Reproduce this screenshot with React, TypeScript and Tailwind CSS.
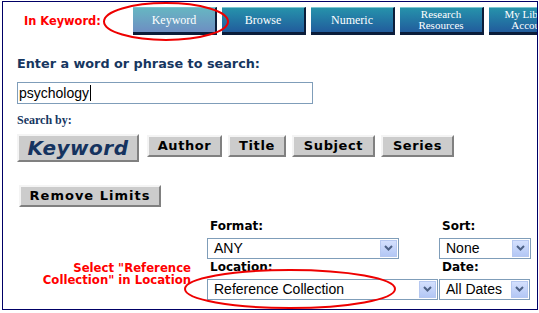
import React from 'react';

const tabs = [
  { label: ['Keyword'], active: true },
  { label: ['Browse'] },
  { label: ['Numeric'] },
  { label: ['Research', 'Resources'] },
  { label: ['My Library', 'Account'] },
];

const byButtons = [
  { label: 'Author', w: 'w-[75px]' },
  { label: 'Title', w: 'w-[58px]' },
  { label: 'Subject', w: 'w-[83px]' },
  { label: 'Series', w: 'w-[73px]' },
];

// little blue drop-down arrow like the old XP selects
const Arrow = () => (
  <div className="flex h-[17px] w-[17px] shrink-0 items-center justify-center border border-[#b6c8f0] bg-gradient-to-b from-[#d4e0fd] to-[#b3c7f5]">
    <svg width="9" height="6" viewBox="0 0 9 6">
      <path d="M1 1 L4.5 4.5 L8 1" fill="none" stroke="#4d6185" strokeWidth="2" />
    </svg>
  </div>
);

const Select = ({ value, className }: { value: string; className: string }) => (
  <div className={`flex h-[21px] items-center justify-between border border-[#7f9db9] bg-white pl-[6px] pr-[1px] ${className}`}>
    <span className="font-['Liberation_Sans',sans-serif] text-[14px] font-normal leading-none text-black">{value}</span>
    <Arrow />
  </div>
);

const GrayButton = ({ children, className }: { children: React.ReactNode; className: string }) => (
  <div
    className={`flex shrink-0 items-center justify-center border-2 border-t-[#f4f4f4] border-l-[#f4f4f4] border-b-[#808080] border-r-[#808080] bg-[#cccccc] ${className}`}
  >
    {children}
  </div>
);

export default function App() {
  return (
    <div className="relative h-[313px] w-[539px] overflow-hidden bg-white">
      <div className="ml-[2px] mt-[1px] h-[309px] w-[536px] overflow-hidden border border-[#000066]">
        {/* tab row */}
        <div className="flex items-start pt-[5px]">
          <div className="w-[130px] shrink-0 whitespace-nowrap pt-[9px] pl-[21px] font-['DejaVu_Sans',sans-serif] text-[11.4px] font-bold leading-none text-[#ff0000]">
            In Keyword:
          </div>
          <div className="flex gap-[5px]">
            {tabs.map((t, i) => (
              <div
                key={i}
                className={`flex h-[28px] w-[84px] shrink-0 flex-col items-center justify-center border-b-[3px] border-r-[2px] border-b-[#0b1d3a] border-r-[#0b1d3a] border-t border-t-[#7cc6d0] ${
                  t.active
                    ? 'bg-gradient-to-b from-[#66b6c2] to-[#6d8ec2]'
                    : 'bg-gradient-to-b from-[#2692ab] to-[#225c9c]'
                }`}
              >
                {t.label.map((l) => (
                  <span key={l} className={`whitespace-nowrap font-['Liberation_Serif',serif] leading-[11px] text-white ${t.label.length > 1 ? 'text-[11px]' : 'text-[12px]'}`}>
                    {l}
                  </span>
                ))}
              </div>
            ))}
          </div>
        </div>

        <div className="pl-[14px]">
          <div className="mt-[23px] font-['DejaVu_Sans',sans-serif] text-[12.8px] font-bold leading-none text-[#16365f]">
            Enter a word or phrase to search:
          </div>
          <div className="mt-[11px] flex h-[22px] w-[296px] items-center border border-[#7f9db9] pl-[1px]">
            <span className="font-['Liberation_Sans',sans-serif] text-[14px] leading-none text-black">psychology</span>
            <span className="ml-[1px] h-[16px] w-[1px] bg-black" />
          </div>
          <div className="mt-[10px] font-['Liberation_Serif',serif] text-[12px] font-bold leading-none text-[#16365f]">
            Search by:
          </div>
          <div className="mt-[8px] flex items-start gap-[6px]">
            <GrayButton className="mr-[2px] h-[28px] w-[122px]">
              <span className="font-['DejaVu_Sans',sans-serif] text-[20px] font-bold italic leading-none tracking-[0.5px] text-[#15335f]">Keyword</span>
            </GrayButton>
            {byButtons.map((b) => (
              <GrayButton key={b.label} className={`mt-[1px] h-[22px] ${b.w}`}>
                <span className="font-['DejaVu_Sans',sans-serif] text-[13px] font-bold leading-none tracking-[0.6px] text-black">{b.label}</span>
              </GrayButton>
            ))}
          </div>
          <GrayButton className="ml-[2px] mt-[23px] h-[22px] w-[142px]">
            <span className="font-['DejaVu_Sans',sans-serif] text-[13px] font-bold leading-none tracking-[1px] text-black">Remove Limits</span>
          </GrayButton>
        </div>

        {/* limits */}
        <div className="mt-[13px] flex">
          <div className="flex w-[204px] shrink-0 flex-col items-end justify-end pb-[14px] pr-[16px] font-['DejaVu_Sans',sans-serif] text-[11.7px] font-bold leading-[12px] text-[#ff0000]">
            <span className="whitespace-nowrap">Select "Reference</span>
            <span className="whitespace-nowrap">Collection" in Location</span>
          </div>
          <div className="grid grid-cols-[232px_92px] font-['DejaVu_Sans',sans-serif] text-[12px] font-bold leading-none text-black">
            <div className="pl-[3px] pb-[6px]">Format:</div>
            <div className="pl-[3px] pb-[6px]">Sort:</div>
            <Select value="ANY" className="w-[192px]" />
            <Select value="None" className="w-[92px]" />
            <div className="pl-[3px] pb-[6px] pt-[2px]">Location:</div>
            <div className="pl-[3px] pb-[6px] pt-[2px]">Date:</div>
            <Select value="Reference Collection" className="w-[231px]" />
            <Select value="All Dates" className="w-[91px]" />
          </div>
        </div>
      </div>

      {/* red callout rings */}
      <svg className="pointer-events-none absolute left-0 top-0" width="539" height="313">
        <ellipse cx="166" cy="21.5" rx="62" ry="18.5" fill="none" stroke="#ee0000" strokeWidth="2" />
        <ellipse cx="290" cy="289" rx="105" ry="19" fill="none" stroke="#ee0000" strokeWidth="2" />
      </svg>
    </div>
  );
}
